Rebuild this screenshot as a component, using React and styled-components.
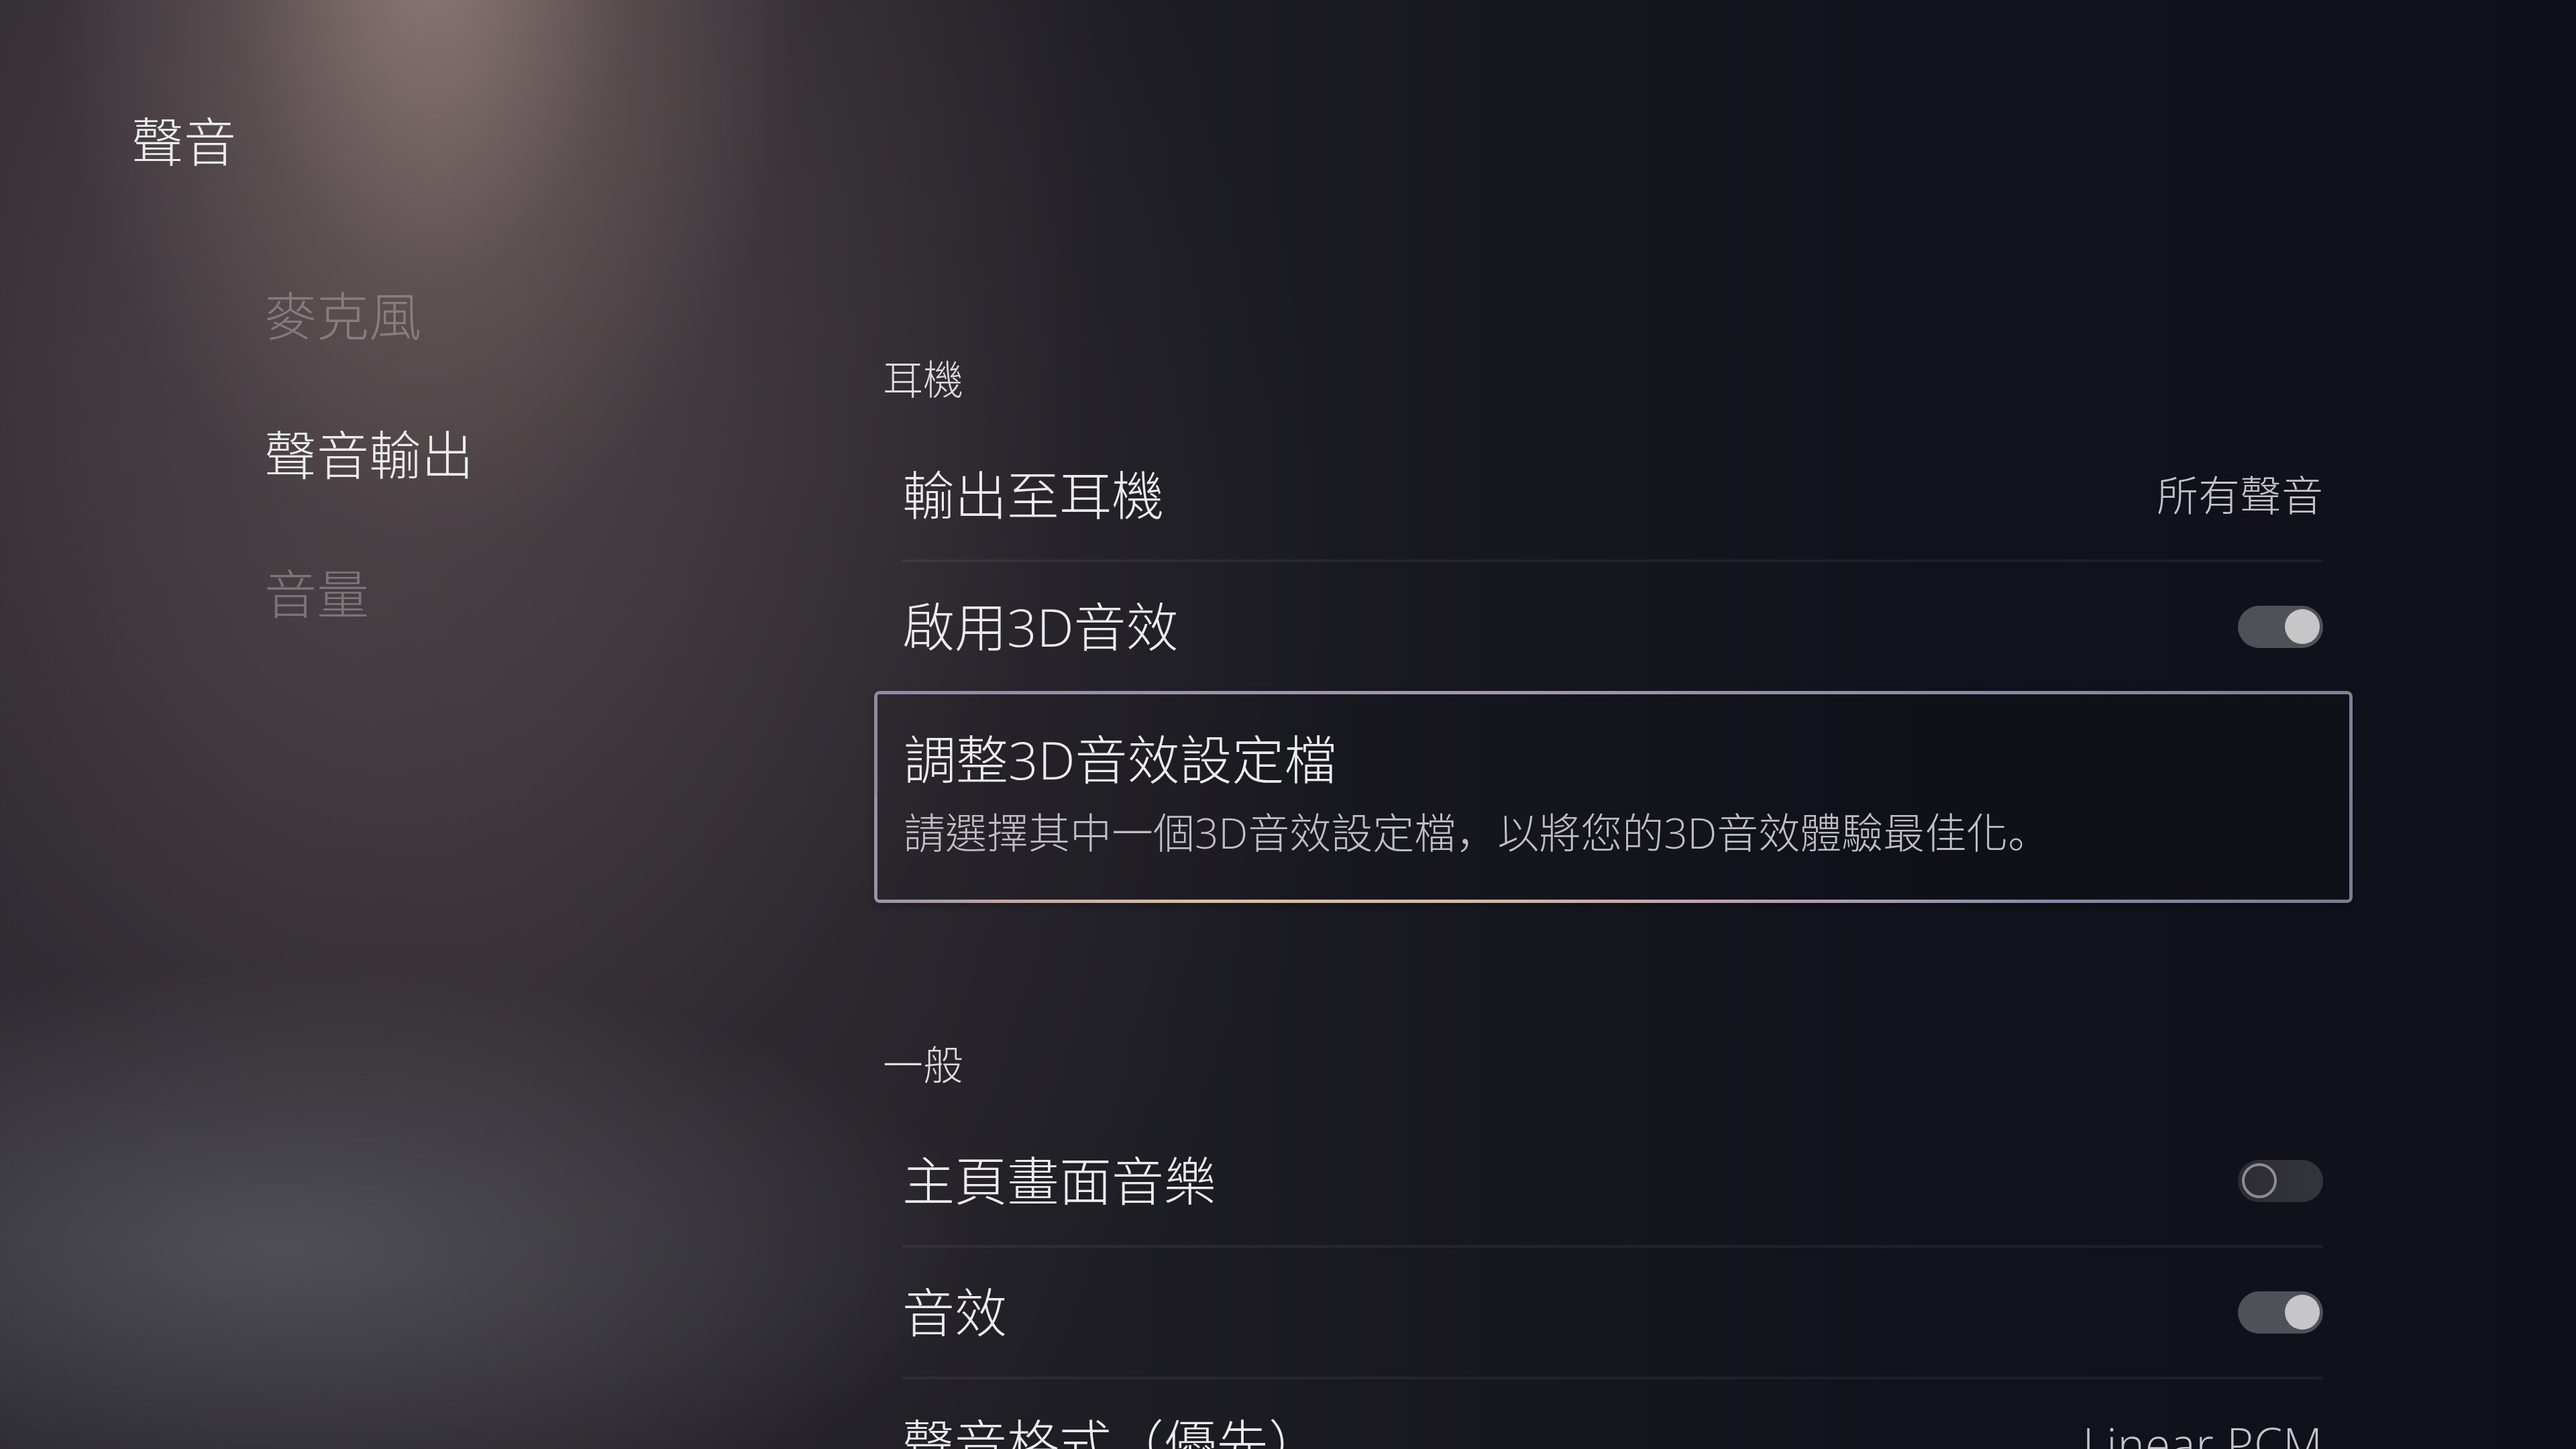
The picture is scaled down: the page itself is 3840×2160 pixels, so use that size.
import React from "react";
import styled, { createGlobalStyle } from "styled-components";

const GlobalStyle = createGlobalStyle`
  html, body {
    margin: 0;
    padding: 0;
    background: #10111a;
  }
  body {
    font-family: "Open Sans", "Noto Sans CJK TC", "Noto Sans", sans-serif;
    font-weight: 300;
    color: #e8e8e8;
  }
`;

const Page = styled.div`
  width: 3840px;
  height: 2160px;
  overflow: hidden;
  display: grid;
  grid-template-columns: 1303px 2204px 1fr;
  background:
    radial-gradient(ellipse 560px 900px at 640px -80px, rgba(200, 170, 160, 0.55), rgba(160, 135, 130, 0.22) 55%, rgba(120, 100, 100, 0) 100%),
    radial-gradient(ellipse 1000px 1400px at 650px 300px, rgba(110, 95, 95, 0.45), rgba(80, 70, 72, 0) 100%),
    radial-gradient(ellipse 1050px 420px at 420px 1860px, rgba(92, 94, 100, 0.7), rgba(80, 82, 88, 0) 100%),
    radial-gradient(ellipse 1500px 1700px at 500px 900px, rgba(62, 55, 60, 0.85), rgba(50, 46, 52, 0) 100%),
    linear-gradient(to right, #24222a 0%, #26242a 20%, #1f1e25 40%, #17171f 58%, #11121b 75%, #0f1019 100%);
`;

const Sidebar = styled.aside`
  padding: 161px 0 0 196px;
`;

const Title = styled.h1`
  margin: 0;
  font-size: 78px;
  line-height: 100px;
  font-weight: 300;
  color: #ececec;
`;

const NavList = styled.nav`
  display: flex;
  flex-direction: column;
  gap: 107px;
  margin: 160px 0 0 198px;
`;

const NavItem = styled.div`
  font-size: 78px;
  line-height: 100px;
  color: ${(p) => (p.$active ? "#ececec" : "rgba(200, 190, 192, 0.42)")};
`;

const Main = styled.main`
  padding-top: 525px;
  display: flex;
  flex-direction: column;
`;

const SectionHeader = styled.h2`
  margin: ${(p) => (p.$first ? "0" : "201px")} 0 37px 0;
  padding-left: 13px;
  font-size: 60px;
  line-height: 80px;
  font-weight: 300;
  color: #dcdcdc;
`;

const Row = styled.div`
  box-sizing: border-box;
  height: ${(p) => (p.$flat ? "192px" : "196px")};
  margin: 0 44px 0 42px;
  display: flex;
  align-items: center;
  justify-content: space-between;
  border-bottom: ${(p) => (p.$flat ? "none" : "4px solid rgba(255, 255, 255, 0.06)")};
`;

const Label = styled.span`
  font-size: 78px;
  line-height: 100px;
  color: #ececec;
`;

const Value = styled.span`
  font-size: ${(p) => (p.$latin ? "68px" : "62px")};
  letter-spacing: ${(p) => (p.$latin ? "1px" : "0")};
  line-height: 80px;
  color: #c4c4c8;
`;

const Punct = styled.span`
  font-family: "Noto Sans CJK SC", "Noto Sans CJK TC", sans-serif;
`;

const Card = styled.div`
  position: relative;
  box-sizing: border-box;
  height: 316px;
  padding: 54px 44px 66px 44px;
  border-radius: 8px;
  display: flex;
  flex-direction: column;
  gap: 16px;
  background: rgba(0, 0, 0, 0.06);
  box-shadow: 0 4px 10px rgba(0, 0, 0, 0.25);

  &::before {
    content: "";
    position: absolute;
    inset: 0;
    padding: 5px;
    border-radius: 8px;
    background:
      linear-gradient(to right, #8e8ba2 0%, #9a92a8 20%, #a598ac 42%, #928fa6 60%, #868aa2 80%, #7e8094 100%) top / 100% 50% no-repeat,
      linear-gradient(to right, #9a90a8 0%, #c9a99c 10%, #dcbd9c 22%, #d9b89c 40%, #c89fac 55%, #aa98b8 68%, #7e8aa8 80%, #7a7c90 100%) bottom / 100% 50% no-repeat;
    -webkit-mask: linear-gradient(#000 0 0) content-box, linear-gradient(#000 0 0);
    -webkit-mask-composite: xor;
    mask-composite: exclude;
    pointer-events: none;
  }
`;

const CardTitle = styled.div`
  font-size: 78px;
  line-height: 96px;
  color: #ececec;
`;

const CardText = styled.div`
  font-size: 62px;
  line-height: 84px;
  color: #bfbfc3;
`;

const Track = styled.div`
  box-sizing: border-box;
  width: 127px;
  height: 63px;
  border-radius: 32px;
  padding: 0 5px 0 6px;
  display: flex;
  align-items: center;
  justify-content: ${(p) => (p.$on ? "flex-end" : "flex-start")};
  background: ${(p) => (p.$on ? "#505058" : "linear-gradient(to right, #2d2c33, #34343b)")};
`;

const Knob = styled.div`
  box-sizing: border-box;
  width: 52px;
  height: 52px;
  border-radius: 50%;
  background: ${(p) => (p.$on ? "#c6c6c9" : "transparent")};
  border: ${(p) => (p.$on ? "none" : "4px solid #8d8c92")};
`;

const Toggle = ({ on }) => (
  <Track $on={on}>
    <Knob $on={on} />
  </Track>
);

export default function App() {
  return (
    <>
      <GlobalStyle />
      <Page>
        <Sidebar>
          <Title>聲音</Title>
          <NavList>
            <NavItem>麥克風</NavItem>
            <NavItem $active>聲音輸出</NavItem>
            <NavItem>音量</NavItem>
          </NavList>
        </Sidebar>

        <Main>
          <SectionHeader $first>耳機</SectionHeader>
          <Row>
            <Label>輸出至耳機</Label>
            <Value>所有聲音</Value>
          </Row>
          <Row $flat>
            <Label>啟用3D音效</Label>
            <Toggle on />
          </Row>
          <Card>
            <CardTitle>調整3D音效設定檔</CardTitle>
            <CardText>
              請選擇其中一個3D音效設定檔<Punct>，</Punct>以將您的3D音效體驗最佳化<Punct>。</Punct>
            </CardText>
          </Card>

          <SectionHeader>一般</SectionHeader>
          <Row>
            <Label>主頁畫面音樂</Label>
            <Toggle on={false} />
          </Row>
          <Row>
            <Label>音效</Label>
            <Toggle on />
          </Row>
          <Row>
            <Label>聲音格式（優先）</Label>
            <Value $latin>Linear PCM</Value>
          </Row>
        </Main>
      </Page>
    </>
  );
}
